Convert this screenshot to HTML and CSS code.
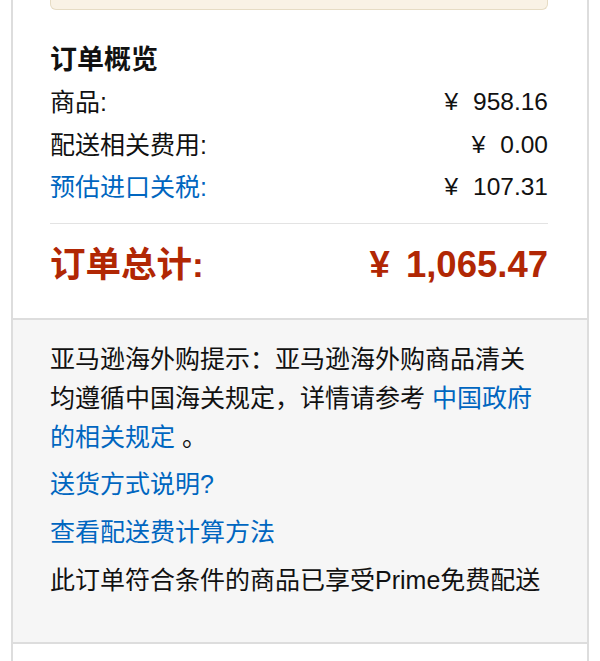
FILE: index.html
```html
<!DOCTYPE html>
<html lang="zh-CN">
<head>
<meta charset="utf-8">
<title>订单概览</title>
<link rel="stylesheet" href="styles.css">
</head>
<body>
<div class="box">
  <section class="summary">
    <div class="notice"></div>
    <h5 class="title">订单概览</h5>
    <div class="row"><span>商品:</span><span class="val"><span class="cur">¥</span>958.16</span></div>
    <div class="row"><span>配送相关费用:</span><span class="val"><span class="cur">¥</span>0.00</span></div>
    <div class="row"><a class="link" href="#">预估进口关税:</a><span class="val"><span class="cur">¥</span>107.31</span></div>
    <hr class="sep">
    <div class="total"><span>订单总计:</span><span class="val"><span class="cur">¥</span>1,065.47</span></div>
  </section>
  <section class="info">
    <p class="tip">亚马逊海外购提示：亚马逊海外购商品清关均遵循中国海关规定，详情请参考 <a class="link" href="#">中国政府的相关规定</a> 。</p>
    <p class="line"><a class="link" href="#">送货方式说明?</a></p>
    <p class="line"><a class="link" href="#">查看配送费计算方法</a></p>
    <p class="line">此订单符合条件的商品已享受Prime免费配送</p>
  </section>
  <section class="after"></section>
</div>
</body>
</html>
```

FILE: styles.css
```css
html, body {
  margin: 0;
  padding: 0;
  background: #ffffff;
}

body {
  font-family: "Liberation Sans", "Noto Sans CJK SC", sans-serif;
  color: #111111;
  font-size: 25px;
  height: 661px;
  overflow: hidden;
}

.box {
  margin-left: 11px;
  width: 574px;
  border-left: 2px solid #dddddd;
  border-right: 2px solid #dddddd;
}

.summary {
  padding: 0 39px 31px 37px;
}

.notice {
  height: 9px;
  background: #f9f2e5;
  border: 1px solid #e6dcc4;
  border-top: none;
  border-radius: 0 0 6px 6px;
}

.title {
  margin: 32px 0 3px 0;
  font-size: 27px;
  line-height: 36px;
  font-weight: bold;
}

.row {
  display: flex;
  justify-content: space-between;
  line-height: 42.5px;
  height: 42.5px;
}

.row .val {
  font-size: 24.5px;
}

.cur {
  margin-right: 15px;
}

.total .cur {
  margin-right: 16px;
}

.link {
  color: #0066c0;
  text-decoration: none;
}

.sep {
  margin: 14px 0 0 0;
  border: none;
  border-top: 1px solid #e3e3e3;
  height: 0;
}

.total {
  display: flex;
  justify-content: space-between;
  margin-top: 19px;
  line-height: 44px;
  font-size: 35.5px;
  font-weight: bold;
  color: #b12704;
}

.total .val {
  font-size: 36.5px;
}

.info {
  background: #f6f6f6;
  border-top: 2px solid #dddddd;
  border-bottom: 2px solid #dddddd;
  padding: 20px 39px 38px 37px;
}

.tip {
  margin: 0 0 3px 0;
  line-height: 39px;
}

.line {
  margin: 0;
  line-height: 48px;
}

.after {
  height: 40px;
  background: #ffffff;
}
```
